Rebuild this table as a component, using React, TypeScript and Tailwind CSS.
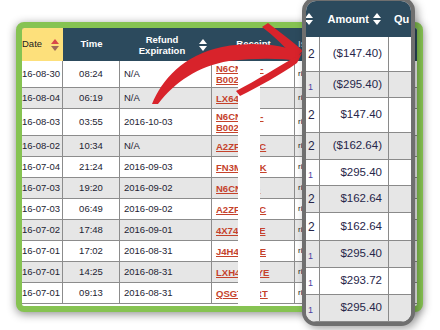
import React from 'react';

type Row = {
  date: string;
  time: string;
  refund: string;
  receipt: string[];
  tall?: boolean;
};

const rows: Row[] = [
  { date: '16-08-30', time: '08:24', refund: 'N/A', receipt: ['N6CN4TG-', 'B0024Q'], tall: true },
  { date: '16-08-04', time: '06:19', refund: 'N/A', receipt: ['LX64WQ'] },
  { date: '16-08-03', time: '03:55', refund: '2016-10-03', receipt: ['N6CN4TG-', 'B0024Q'], tall: true },
  { date: '16-08-02', time: '10:34', refund: 'N/A', receipt: ['A2ZFQ8KC'] },
  { date: '16-07-04', time: '21:24', refund: '2016-09-03', receipt: ['FN3MX7PK'] },
  { date: '16-07-03', time: '19:20', refund: '2016-09-02', receipt: ['N6CN4TG'] },
  { date: '16-07-03', time: '06:49', refund: '2016-09-02', receipt: ['A2ZFQ8KC'] },
  { date: '16-07-02', time: '17:48', refund: '2016-09-01', receipt: ['4X74RW9E'] },
  { date: '16-07-01', time: '17:02', refund: '2016-08-31', receipt: ['J4H4RW9E'] },
  { date: '16-07-01', time: '14:25', refund: '2016-08-31', receipt: ['LXH4WQYE'] },
  { date: '16-07-01', time: '09:13', refund: '2016-08-31', receipt: ['QSGTH7RT'] },
];

const zoomRows = [
  { amount: '($147.40)', h: 'h-[35px]', lead: '2' },
  { amount: '($295.40)', h: 'h-[26px]', lead: '1' },
  { amount: '$147.40', h: 'h-[35px]', lead: '2' },
  { amount: '($162.64)', h: 'h-[27px]', lead: '2' },
  { amount: '$295.40', h: 'h-[26px]', lead: '1' },
  { amount: '$162.64', h: 'h-[27px]', lead: '2' },
  { amount: '$162.64', h: 'h-[28px]', lead: '2' },
  { amount: '$295.40', h: 'h-[27px]', lead: '1' },
  { amount: '$293.72', h: 'h-[27px]', lead: '1' },
  { amount: '$295.40', h: 'h-[27px]', lead: '1' },
];

const SortIcon = ({ up = '#ffffff', down = '#ffffff', className = '' }: { up?: string; down?: string; className?: string }) => (
  <svg width="8" height="12" viewBox="0 0 8 12" className={className}>
    <path d="M4 0 L8 5 L0 5 Z" fill={up} />
    <path d="M0 7 L8 7 L4 12 Z" fill={down} />
  </svg>
);

const Arrow = () => (
  <svg className="absolute left-0 top-0 pointer-events-none" width="440" height="330" viewBox="0 0 440 330">
    <g fill="#d8232b">
      {/* main curve */}
      <path d="M152 104 C162 80 183 55 222 47 C254 41 282 45 300 52 L298 61 C280 58 256 58 229 61 C198 66 175 82 158 104 Z" />
      {/* upper arm of head */}
      <path d="M262 27 L268 23 C280 32 293 42 303 51 L295 58 C285 47 274 36 262 27 Z" />
      {/* lower arm of head */}
      <path d="M302 53 L297 63 C280 75 260 86 240 96 L236 91 C257 80 278 67 302 53 Z" />
    </g>
  </svg>
);

export default function App() {
  return (
    <div className="relative w-[440px] h-[330px] overflow-hidden bg-white font-['Liberation_Sans',Arial,sans-serif]">
      {/* Card with the table */}
      <div className="ml-4 mt-[22px] w-[407px] h-[290px] rounded-lg border-[6px] border-[#86c352] bg-white overflow-hidden shadow-[0_2px_10px_rgba(0,0,0,0.45)]">
        {/* header */}
        <div className="flex h-[33px] bg-[#2c4a5d] text-white text-[9.5px] font-bold">
          <div className="w-[41px] shrink-0 bg-[#fde07b] text-[#222] font-normal flex items-center justify-between pr-[4px]">
            <span>Date</span>
            <SortIcon up="#d9474a" down="#a06a58" />
          </div>
          <div className="w-[57px] shrink-0 flex items-center justify-center">Time</div>
          <div className="w-[92px] shrink-0 flex items-center justify-center gap-[14px] pl-[14px]">
            <span className="text-center leading-[11px]">
              Refund
              <br />
              Expiration
            </span>
            <SortIcon />
          </div>
          <div className="w-[83px] shrink-0 flex items-center justify-center">Receipt</div>
          <div className="flex-1 flex items-center pl-[3px] font-normal text-[#cfd8de]">Is</div>
        </div>

        {/* body */}
        {rows.map((r, i) => (
          <div
            key={i}
            className={`flex border-b border-[#8c8c8c] text-[9.5px] text-[#1d1d33] ${r.tall ? 'h-[27px]' : 'h-[21px]'} ${
              i % 2 ? 'bg-[#e6e6e6]' : 'bg-white'
            }`}
          >
            <div className="w-[41px] shrink-0 border-r border-[#8c8c8c] flex items-center">{r.date}</div>
            <div className="w-[57px] shrink-0 border-r border-[#8c8c8c] flex items-center justify-center">{r.time}</div>
            <div className="w-[92px] shrink-0 border-r border-[#8c8c8c] flex items-center pl-[4px]">{r.refund}</div>
            <div className="w-[83px] shrink-0 border-r border-[#8c8c8c] flex flex-col justify-center pl-[4px] leading-[11px]">
              {r.receipt.map((t, j) => (
                <span key={j} className="font-bold text-[#c5422b] underline decoration-[#c5422b] underline-offset-[1px]">
                  {t}
                </span>
              ))}
            </div>
            <div className="flex-1 flex items-center pl-[3px] text-[8px] text-[#222]">ris</div>
          </div>
        ))}
      </div>

      {/* white mask over receipts */}
      <div className="absolute left-[238px] top-[64px] w-[22px] h-[241px] bg-white" />

      <Arrow />

      {/* magnified panel */}
      <div className="absolute left-[302px] top-[-3px] w-[113px] h-[329px] rounded-[14px] border-4 border-[#6f6f6f] bg-white overflow-hidden shadow-[3px_3px_8px_rgba(0,0,0,0.35)]">
        <div className="flex h-[36px] bg-[#2c4a5d] text-white text-[11px] font-bold">
          <div className="w-[14px] shrink-0 flex items-center overflow-hidden">
            <SortIcon className="-ml-[1px]" />
          </div>
          <div className="w-[69px] shrink-0 flex items-center justify-end gap-[4px] pr-[8px]">
            <span>Amount</span>
            <SortIcon />
          </div>
          <div className="flex-1 flex items-center pl-[5px]">Qu</div>
        </div>
        {zoomRows.map((z, i) => (
          <div
            key={i}
            className={`flex border-b-[1.5px] border-[#8a8a8a] text-[11.5px] text-[#27264a] ${z.h} ${i % 2 ? 'bg-[#e6e6e6]' : 'bg-white'}`}
          >
            <div className="w-[14px] shrink-0 border-r-[1.5px] border-[#8a8a8a] flex items-center pl-[2px]">
              <span className={z.lead === '2' ? 'text-[12px]' : 'text-[9px] text-[#4a3fa0] mt-[6px]'}>{z.lead}</span>
            </div>
            <div className="w-[69px] shrink-0 border-r-[1.5px] border-[#8a8a8a] flex items-center justify-end pr-[6px]">{z.amount}</div>
            <div className="flex-1" />
          </div>
        ))}
      </div>
    </div>
  );
}
